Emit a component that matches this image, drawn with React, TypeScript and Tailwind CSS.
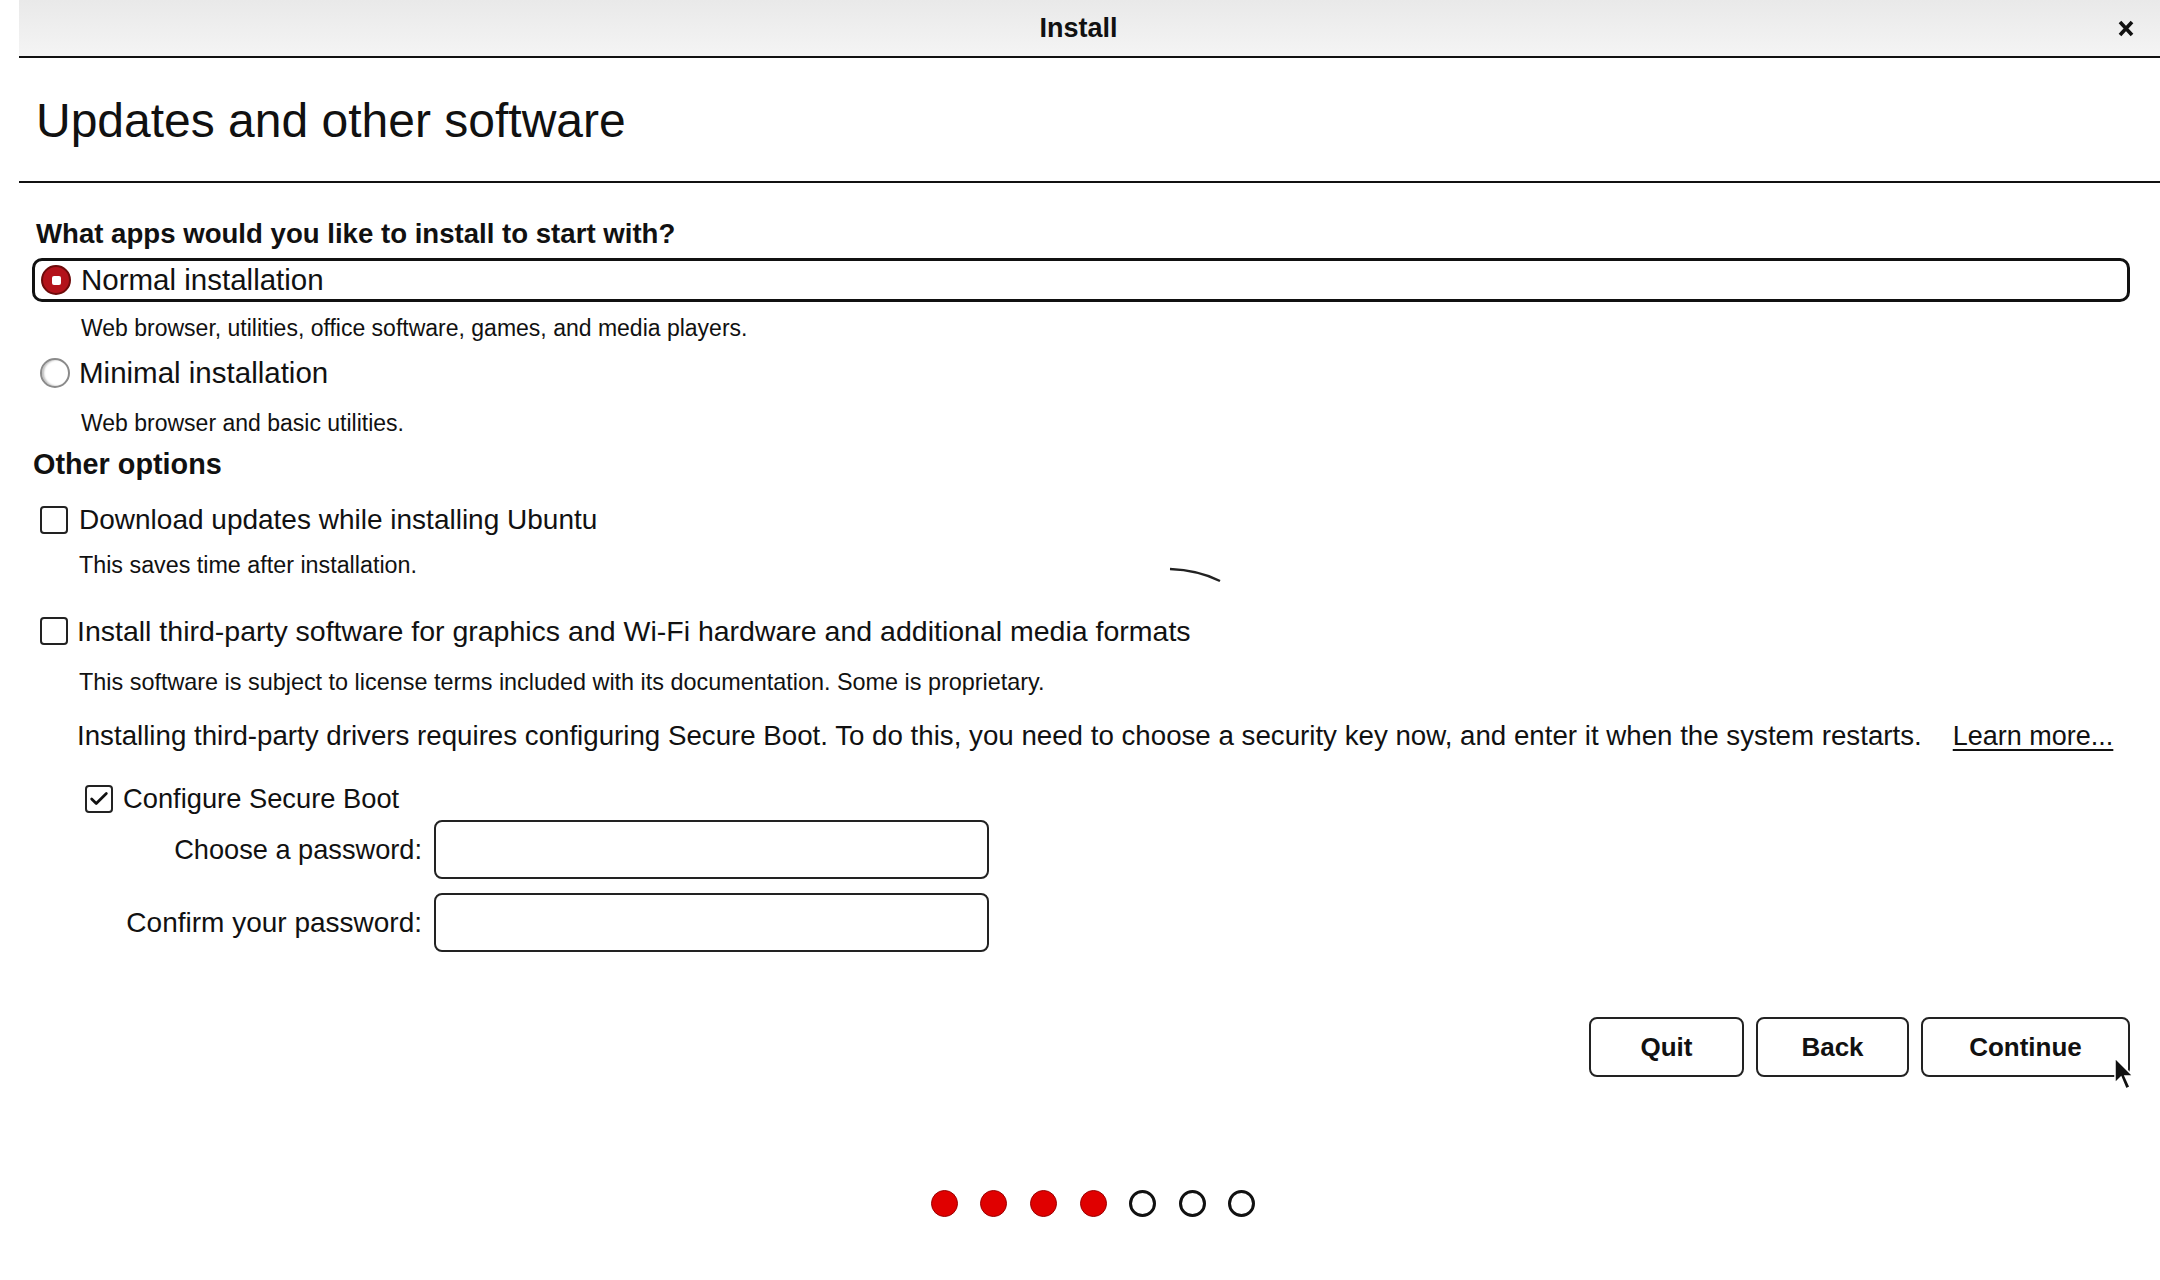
import { Check } from "lucide-react";

function Radio({ checked }: { checked?: boolean }) {
  if (checked) {
    return (
      <span className="flex h-[30px] w-[30px] shrink-0 items-center justify-center rounded-full border-2 border-[#6d0a0a] bg-[#b3121a]">
        <span className="h-[9px] w-[9px] rounded-[2px] bg-white" />
      </span>
    );
  }
  return (
    <span className="h-[30px] w-[30px] shrink-0 rounded-full border-2 border-[#8a8a8a] bg-white shadow-[inset_2px_0_2px_rgba(0,0,0,0.25)]" />
  );
}

function Checkbox({ checked }: { checked?: boolean }) {
  return (
    <span className="flex h-[28px] w-[28px] shrink-0 items-center justify-center rounded-[4px] border-2 border-[#222] bg-white">
      {checked && <Check size={22} strokeWidth={3} className="text-[#111]" />}
    </span>
  );
}

const steps = [true, true, true, true, false, false, false];

function App() {
  return (
    <div className="relative h-[1280px] w-[2160px] overflow-hidden bg-white pl-[19px] font-['Liberation_Sans',Arial,sans-serif] text-[#111]">
      {/* title bar */}
      <div className="relative flex h-[58px] items-center justify-center border-b-2 border-[#111] bg-gradient-to-b from-[#e9e9e9] to-[#f4f4f4] pr-[22px]">
        <span className="text-[27px] font-bold leading-none">Install</span>
        <svg
          className="absolute right-[26px] top-[20px]"
          width="16"
          height="17"
          viewBox="0 0 16 17"
        >
          <path d="M2 2 L14 15 M14 2 L2 15" stroke="#111" strokeWidth="3.6" />
        </svg>
      </div>

      {/* header */}
      <div className="flex h-[125px] items-center border-b-2 border-[#111] pl-[17px] pt-[3px]">
        <h1 className="text-[48px] leading-none">Updates and other software</h1>
      </div>

      <div className="pr-[30px]">
        <div className="mt-[35px] pl-[17px] text-[27.6px] font-bold leading-[32px]">
          What apps would you like to install to start with?
        </div>

        <div className="ml-[13px] mt-[8px] flex h-[44px] items-center gap-[10px] rounded-[10px] border-[3px] border-[#111] pl-[6px]">
          <Radio checked />
          <span className="text-[29.5px] leading-none">Normal installation</span>
        </div>
        <div className="mt-[11px] pl-[62px] text-[23px] leading-[30px]">
          Web browser, utilities, office software, games, and media players.
        </div>

        <div className="mt-[12px] flex h-[36px] items-center gap-[9px] pl-[21px]">
          <Radio />
          <span className="text-[29.5px] leading-none">Minimal installation</span>
        </div>
        <div className="mt-[17px] pl-[62px] text-[23px] leading-[30px]">
          Web browser and basic utilities.
        </div>

        <div className="mt-[9px] pl-[14px] text-[28.8px] font-bold leading-[34px]">
          Other options
        </div>

        <div className="mt-[21px] flex h-[36px] items-center gap-[11px] pl-[21px]">
          <Checkbox />
          <span className="text-[28px] leading-none">
            Download updates while installing Ubuntu
          </span>
        </div>
        <div className="mt-[12px] pl-[60px] text-[23.3px] leading-[30px]">
          This saves time after installation.
        </div>

        <div className="mt-[33px] flex h-[36px] items-center gap-[9px] pl-[21px]">
          <Checkbox />
          <span className="text-[28.5px] leading-none">
            Install third-party software for graphics and Wi-Fi hardware and
            additional media formats
          </span>
        </div>
        <div className="mt-[18px] pl-[60px] text-[23.4px] leading-[30px]">
          This software is subject to license terms included with its
          documentation. Some is proprietary.
        </div>

        <div className="mt-[21px] flex h-[36px] items-center gap-[31px] pl-[58px]">
          <span className="text-[27.7px] leading-none">
            Installing third-party drivers requires configuring Secure Boot. To
            do this, you need to choose a security key now, and enter it when
            the system restarts.
          </span>
          <span className="text-[27px] leading-none underline decoration-2 underline-offset-4">
            Learn more...
          </span>
        </div>

        <div className="mt-[27px] flex h-[36px] items-center gap-[10px] pl-[66px]">
          <Checkbox checked />
          <span className="text-[27.3px] leading-none">Configure Secure Boot</span>
        </div>

        <div className="mt-[3px] flex flex-col gap-[14px]">
          <div className="flex items-center gap-[12px]">
            <label className="w-[403px] text-right text-[27.2px] leading-none">
              Choose a password:
            </label>
            <div className="h-[59px] w-[555px] rounded-[8px] border-2 border-[#222]" />
          </div>
          <div className="flex items-center gap-[12px]">
            <label className="w-[403px] text-right text-[28px] leading-none">
              Confirm your password:
            </label>
            <div className="h-[59px] w-[555px] rounded-[8px] border-2 border-[#222]" />
          </div>
        </div>

        <div className="mt-[65px] flex justify-end gap-[12px]">
          <button className="h-[60px] w-[155px] rounded-[8px] border-2 border-[#222] text-[26px] font-bold">
            Quit
          </button>
          <button className="h-[60px] w-[153px] rounded-[8px] border-2 border-[#222] text-[26px] font-bold">
            Back
          </button>
          <button className="h-[60px] w-[209px] rounded-[8px] border-2 border-[#222] text-[26px] font-bold">
            Continue
          </button>
        </div>
      </div>

      <div className="mt-[113px] flex justify-center gap-[22.6px] pl-[7px]">
        {steps.map((done, i) => (
          <span
            key={i}
            className={
              done
                ? "h-[27px] w-[27px] rounded-full border border-[#9a0000] bg-[#e00000]"
                : "h-[27px] w-[27px] rounded-full border-[3px] border-[#111] bg-white"
            }
          />
        ))}
      </div>

      {/* mouse pointer */}
      <svg
        className="absolute left-[2113px] top-[1056px]"
        width="22"
        height="36"
        viewBox="0 0 22 36"
      >
        <path
          d="M2 2 L2 27 L8 21 L13 33 L17 31 L12 20 L20 20 Z"
          fill="#111"
          stroke="#fff"
          strokeWidth="1.5"
        />
      </svg>

      {/* stray mark */}
      <svg
        className="absolute left-[1168px] top-[566px]"
        width="56"
        height="18"
        viewBox="0 0 56 18"
      >
        <path d="M2 3 Q30 4 52 15" stroke="#222" strokeWidth="2.4" fill="none" />
      </svg>
    </div>
  );
}

export default App;
